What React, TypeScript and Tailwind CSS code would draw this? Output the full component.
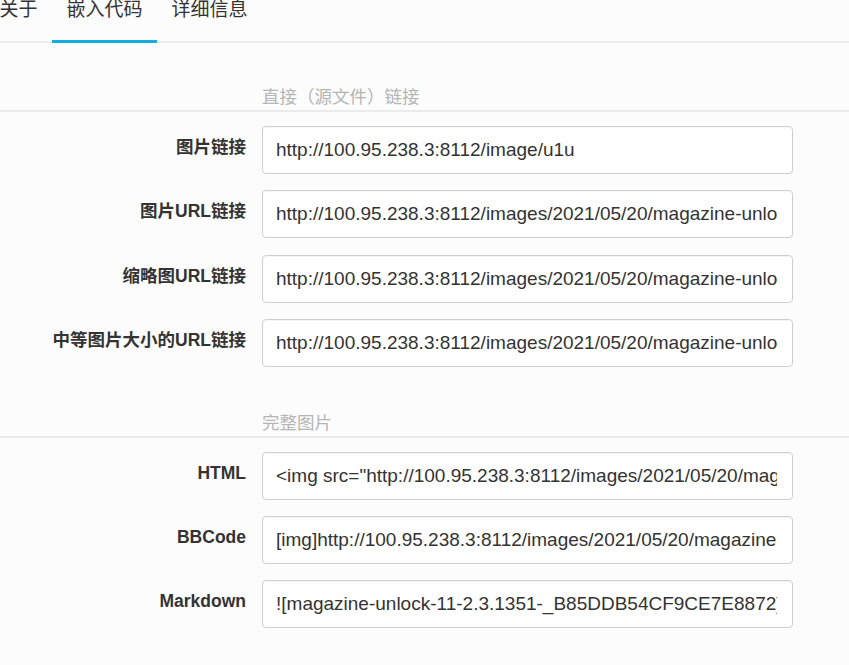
import React from 'react';

const directLinks = [
  { label: '图片链接', value: 'http://100.95.238.3:8112/image/u1u' },
  { label: '图片URL链接', value: 'http://100.95.238.3:8112/images/2021/05/20/magazine-unlock-11-2.3.1351-_B85DDB54CF9CE7E8872.jpg' },
  { label: '缩略图URL链接', value: 'http://100.95.238.3:8112/images/2021/05/20/magazine-unlock-11-2.3.1351-_B85DDB54CF9CE7E8872.th.jpg' },
  { label: '中等图片大小的URL链接', value: 'http://100.95.238.3:8112/images/2021/05/20/magazine-unlock-11-2.3.1351-_B85DDB54CF9CE7E8872.md.jpg' },
];

const fullImage = [
  { label: 'HTML', value: '<img src="http://100.95.238.3:8112/images/2021/05/20/magazine-unlock-11-2.3.1351-_B85DDB54CF9CE7E8872.jpg" alt="magazine" border="0">' },
  { label: 'BBCode', value: '[img]http://100.95.238.3:8112/images/2021/05/20/magazine-unlock-11-2.3.1351-_B85DDB54CF9CE7E8872.jpg[/img]' },
  { label: 'Markdown', value: '![magazine-unlock-11-2.3.1351-_B85DDB54CF9CE7E8872](http://100.95.238.3:8112/images/2021/05/20/magazine.jpg)' },
];

const tabs = ['关于', '嵌入代码', '详细信息'];

const SectionTitle = ({ title, className }: { title: string; className: string }) => (
  <div className={`border-b-2 border-[#ebebeb] pb-[3px] ${className}`}>
    <div className="pl-[262px] text-[17.5px] leading-[20px] text-[#b5b5b5]">{title}</div>
  </div>
);

const FieldRow = ({ label, value }: { label: string; value: string }) => (
  <div className="flex items-start">
    <label className="w-[246px] shrink-0 pt-[9px] text-right text-[17.5px] font-bold leading-[24px] text-[#333]">
      {label}
    </label>
    <input
      readOnly
      value={value}
      className="ml-[16px] h-[48px] w-[531px] rounded-[4px] border border-[#cfcfcf] bg-white pl-[13px] pr-[15px] text-[19px] text-[#333] shadow-[inset_0_1px_1px_rgba(0,0,0,0.04)] outline-none"
    />
  </div>
);

export default function App() {
  return (
    <div className="min-h-screen overflow-hidden bg-[#fcfcfc] font-['Liberation_Sans','Noto_Sans_CJK_SC',sans-serif]">
      {/* Tabs */}
      <div className="flex h-[43px] items-start border-b-2 border-[#ebebeb]">
        <div className="-ml-[15px] flex">
          {tabs.map((tab) => (
            <div
              key={tab}
              className={`h-[43px] px-[14.5px] text-[19px] leading-[19px] text-[#333] ${
                tab === '嵌入代码' ? 'border-b-[3px] border-[#0fb0e0]' : ''
              }`}
            >
              {tab}
            </div>
          ))}
        </div>
      </div>

      <SectionTitle title="直接（源文件）链接" className="mt-[44px]" />
      <div className="flex flex-col gap-[16.3px] pt-[14px]">
        {directLinks.map((f) => (
          <FieldRow key={f.label} {...f} />
        ))}
      </div>

      <SectionTitle title="完整图片" className="mt-[46px]" />
      <div className="flex flex-col gap-[16px] pt-[14px]">
        {fullImage.map((f) => (
          <FieldRow key={f.label} {...f} />
        ))}
      </div>
    </div>
  );
}
